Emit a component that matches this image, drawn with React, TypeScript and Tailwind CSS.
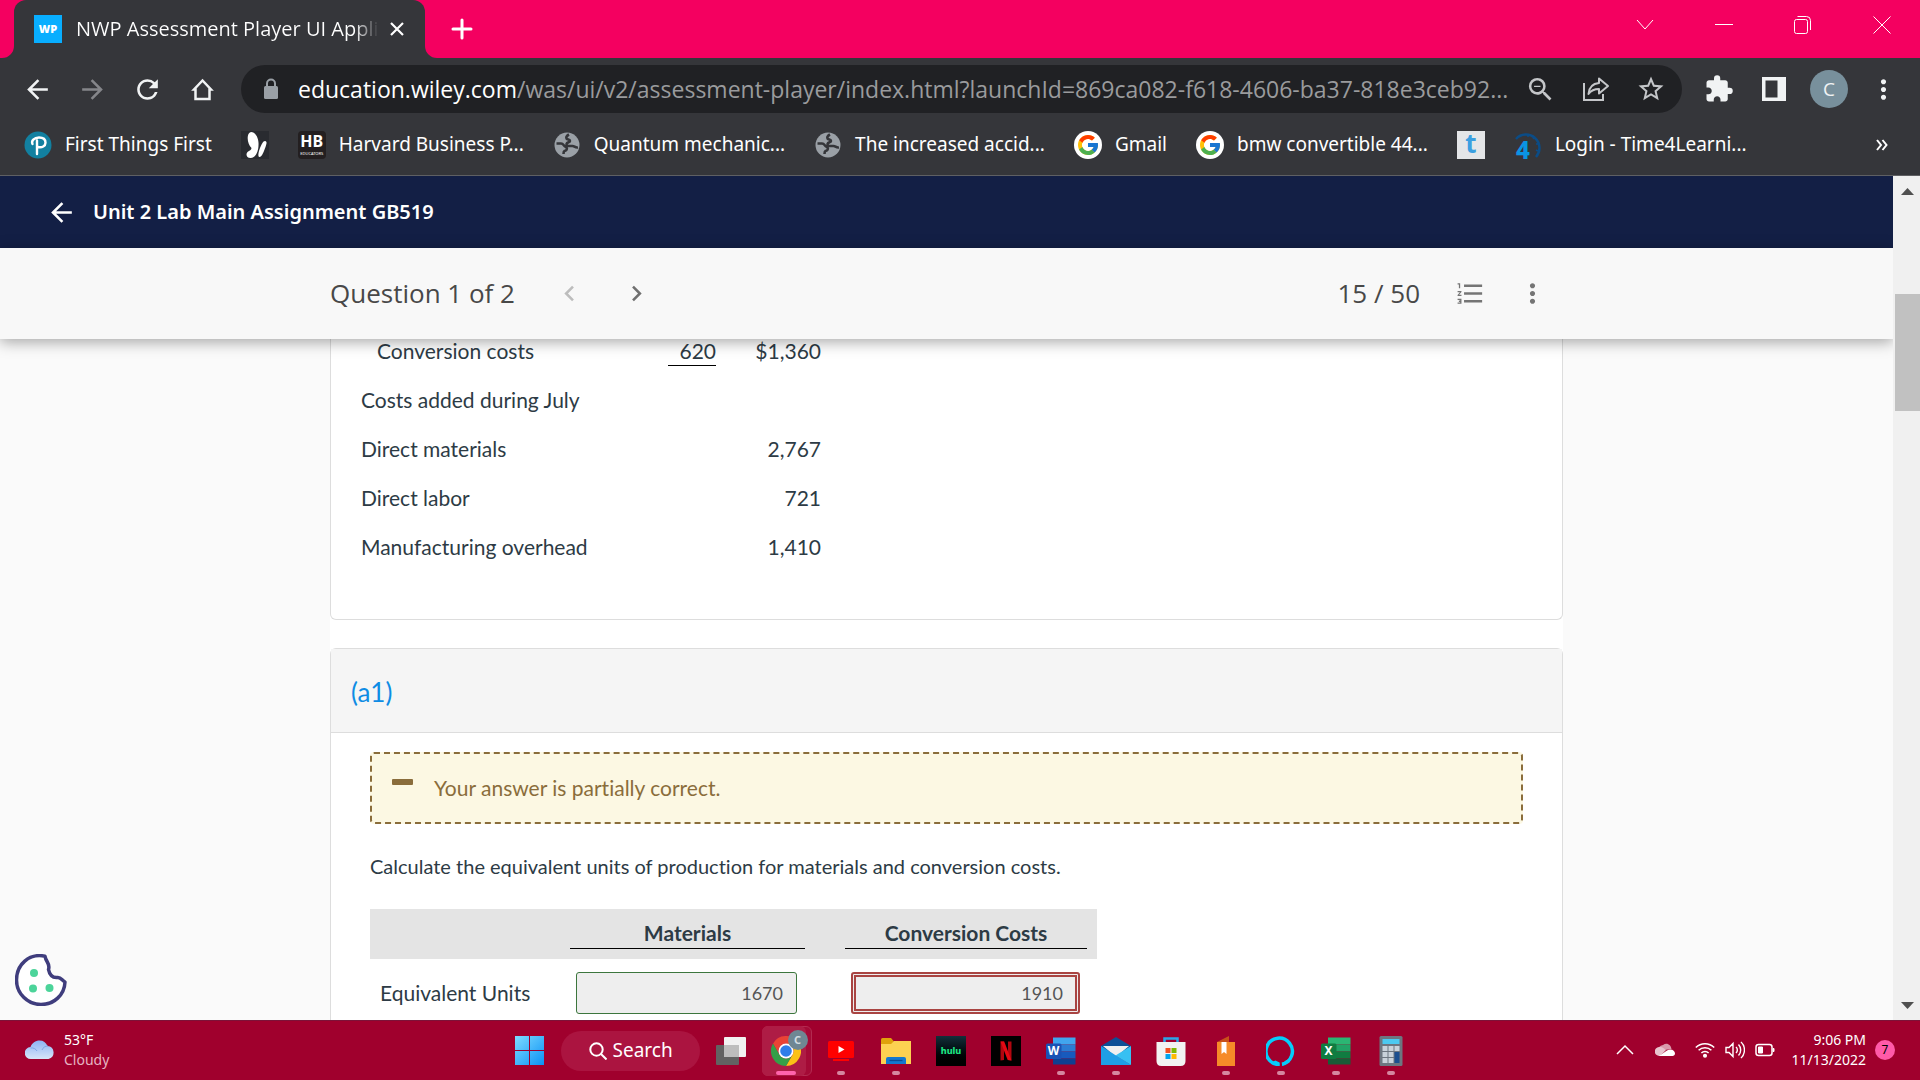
import type { ReactNode } from 'react'
import {
  MdArrowBack,
  MdArrowForward,
  MdChevronLeft,
  MdChevronRight,
  MdExtension,
  MdFormatListNumbered,
  MdMoreVert,
  MdRefresh,
  MdStarBorder,
  MdZoomOut,
} from 'react-icons/md'
import { FcGoogle } from 'react-icons/fc'

function TabStrip() {
  return (
    <div className="flex h-[58px] shrink-0 items-stretch bg-[#f40060] text-white">
      <div className="relative ml-[14px] flex w-[411px] items-center rounded-t-xl bg-[#35363a] pl-5 pr-5">
        <svg className="absolute -left-3 bottom-0 h-3 w-3" viewBox="0 0 12 12" aria-hidden="true">
          <path d="M12 0v12H0A12 12 0 0 0 12 0Z" fill="#35363a" />
        </svg>
        <svg className="absolute -right-3 bottom-0 h-3 w-3" viewBox="0 0 12 12" aria-hidden="true">
          <path d="M0 0v12h12A12 12 0 0 1 0 0Z" fill="#35363a" />
        </svg>
        <span className="flex h-7 w-7 shrink-0 items-center justify-center bg-[#08aeff] text-[11px] font-extrabold">
          WP
        </span>
        <span className="ml-[14px] w-[304px] whitespace-nowrap bg-linear-to-r from-white from-92% to-[#35363a] bg-clip-text text-[20px] text-transparent">
          NWP Assessment Player UI Appli
        </span>
        <button aria-label="Close tab" className="ml-[10px] shrink-0">
          <svg className="h-4 w-4" viewBox="0 0 16 16" fill="none" stroke="#fff" strokeWidth="2.2">
            <path d="m2 2 12 12M14 2 2 14" />
          </svg>
        </button>
      </div>
      <button aria-label="New tab" className="ml-[26px]">
        <svg className="h-[22px] w-[22px]" viewBox="0 0 22 22" fill="none" stroke="#fff" strokeWidth="3" strokeLinecap="round">
          <path d="M11 2v18M2 11h18" />
        </svg>
      </button>
      <div className="ml-auto flex items-center gap-[59px] pb-[9px] pr-7">
        <button aria-label="Search tabs">
          <svg className="h-5 w-5" viewBox="0 0 20 20" fill="none" stroke="#fff">
            <path d="m2 5 8 9 8-9" />
          </svg>
        </button>
        <button aria-label="Minimize">
          <svg className="h-5 w-5" viewBox="0 0 20 20" fill="none" stroke="#fff">
            <path d="M1 9.500h18" />
          </svg>
        </button>
        <button aria-label="Restore">
          <svg className="h-5 w-5" viewBox="0 0 20 20" fill="none" stroke="#fff">
            <rect x="1.500" y="4.500" width="13" height="14" rx="2" />
            <path d="M4.500 1.500h9a4 4 0 0 1 4 4V15" />
          </svg>
        </button>
        <button aria-label="Close">
          <svg className="h-5 w-5" viewBox="0 0 20 20" fill="none" stroke="#fff">
            <path d="m1.500 1.500 17 17M18.500 1.500l-17 17" />
          </svg>
        </button>
      </div>
    </div>
  )
}

function AddressBar() {
  return (
    <div className="flex h-[62px] shrink-0 items-center bg-[#35363a] pl-[22px] pr-[21px] text-[#f1f3f4]">
      <div className="flex items-center gap-6">
        <button aria-label="Back">
          <MdArrowBack className="h-[31px] w-[31px]" />
        </button>
        <button aria-label="Forward" className="text-[#85868a]">
          <MdArrowForward className="h-[31px] w-[31px]" />
        </button>
        <button aria-label="Reload">
          <MdRefresh className="h-[31px] w-[31px]" />
        </button>
        <button aria-label="Home">
          <svg className="h-[31px] w-[31px]" viewBox="0 0 31 31" fill="none" stroke="currentColor" strokeWidth="2.5">
            <path d="M15.500 6.500 7 15.500h1.500V25h14v-9.500H24Z" />
          </svg>
        </button>
      </div>
      <div className="ml-[23px] flex h-12 min-w-0 flex-1 items-center rounded-full bg-[#202124] pl-[23px] pr-4">
        <svg className="h-[22px] w-[14px] shrink-0" viewBox="0 0 14 22" aria-hidden="true">
          <rect y="8" width="14" height="13" rx="1.500" fill="#9aa0a6" />
          <path d="M3 9V5.500a4 4 0 0 1 8 0V9" fill="none" stroke="#9aa0a6" strokeWidth="2" />
        </svg>
        <span className="ml-5 min-w-0 flex-1 whitespace-nowrap text-[23px] leading-8 text-[#9a9b9d]">
          <span className="text-white">education.wiley.com</span>
          /was/ui/v2/assessment-player/index.html?launchId=869ca082-f618-4606-ba37-818e3ceb92...
        </span>
        <div className="flex shrink-0 items-center gap-[25px] text-[#c4c6c9]">
          <button aria-label="Zoom">
            <MdZoomOut className="h-[31px] w-[31px]" />
          </button>
          <button aria-label="Share this page">
            <svg className="h-[30px] w-[30px]" viewBox="0 0 30 30" fill="none" stroke="currentColor" strokeWidth="2">
              <path d="M3 9v17h19v-6" />
              <path d="M18 4.500 27 12l-9 7.500V15c-5 0-8 1.500-10.500 5C8 13.500 12 9.500 18 9Z" strokeLinejoin="round" />
            </svg>
          </button>
          <button aria-label="Bookmark this tab">
            <MdStarBorder className="h-[30px] w-[30px]" />
          </button>
        </div>
      </div>
      <div className="ml-[22px] flex shrink-0 items-center">
        <button aria-label="Extensions">
          <MdExtension className="h-[30px] w-[30px]" />
        </button>
        <button aria-label="Side panel" className="ml-7">
          <svg className="h-6 w-6" viewBox="0 0 24 24" fill="currentColor">
            <path d="M0 0h24v24H0ZM3.500 3.500v17h12v-17Z" fillRule="evenodd" />
          </svg>
        </button>
        <button className="ml-6 h-[38px] w-[38px] rounded-full bg-[#78909c] text-[19px] leading-[38px]">C</button>
        <button aria-label="Menu" className="ml-5">
          <MdMoreVert className="h-[31px] w-[31px]" />
        </button>
      </div>
    </div>
  )
}

function Globe() {
  return (
    <svg className="h-7 w-7" viewBox="0 0 28 28" aria-hidden="true">
      <circle cx="14" cy="14" r="12.500" fill="#9aa0a6" />
      <path
        d="M16 3.500c-1 .5-3.500 2-2.500 4 1 1.500 3.500.5 3.500 2.500 0 1.500-3 1-3.500 3-.3 1.500 1.500 2 3 2h3c2 0 2.500 2 5.500 1.500M3.500 12.500h4.500c2 0 2.500 1.500 3.500 2.500l2 1.500c1 1.500 0 3-2 3.500-1 .5-1 2-1 3"
        fill="none"
        stroke="#35363a"
        strokeWidth="2.600"
      />
    </svg>
  )
}

function GoogleMark() {
  return (
    <span className="flex h-7 w-7 items-center justify-center rounded-full bg-white">
      <FcGoogle className="h-6 w-6" />
    </span>
  )
}

const bookmarks: { id: string; label?: string; icon: ReactNode }[] = [
  {
    id: 'pearson',
    label: 'First Things First',
    icon: (
      <svg className="h-7 w-7" viewBox="0 0 28 28" aria-hidden="true">
        <circle cx="14" cy="14" r="13.500" fill="#1280a0" />
        <path d="M13 23V9.500M8.500 13c-1.500-3 1.500-6.500 6.500-6.500 4 0 6.500 2 6.500 5.200 0 3.300-3.500 5.300-7.500 4.300" fill="none" stroke="#fff" strokeWidth="2.400" strokeLinecap="round" />
      </svg>
    ),
  },
  {
    id: 'butterfly',
    icon: (
      <svg className="h-7 w-7" viewBox="0 0 28 28" aria-hidden="true">
        <path d="M0 0h28v28H0Z" fill="#292b30" />
        <path d="M10 1c5 0 8 7 7.500 13 0 5-2 13-8 13-4 0-5-4-3-6 2-1.500 4-2 4-4C6 13 5 2 10 1Z" fill="#fff" />
        <path d="M24 10c2.500.5 1.500 3 .5 6-1.500 4-3.500 10-6 10-2-.5-1-5 .5-9 1.500-3.500 3-7 5-7Z" fill="#fff" />
      </svg>
    ),
  },
  {
    id: 'harvard',
    label: 'Harvard Business P...',
    icon: (
      <span className="flex h-7 w-7 flex-col items-center justify-center rounded bg-[#231f20] leading-none">
        <span className="text-[16px] font-bold leading-[15px]">HB</span>
        <span className="mt-0.5 text-[4px] leading-[5px]">EDUCATORS</span>
      </span>
    ),
  },
  { id: 'quantum', label: 'Quantum mechanic...', icon: <Globe /> },
  { id: 'accid', label: 'The increased accid...', icon: <Globe /> },
  { id: 'gmail', label: 'Gmail', icon: <GoogleMark /> },
  { id: 'bmw', label: 'bmw convertible 44...', icon: <GoogleMark /> },
  {
    id: 'tumble',
    icon: (
      <span className="flex h-7 w-7 items-center justify-center bg-[#e4e6e8] text-[26px] font-bold leading-none text-[#3b9fe0]">
        <span className="pb-1">t</span>
      </span>
    ),
  },
  {
    id: 'time4',
    label: 'Login - Time4Learni...',
    icon: (
      <span className="relative h-7 w-7">
        <svg className="h-7 w-7" viewBox="0 0 28 28" aria-hidden="true">
          <path d="M2 8A13 13 0 1 1 22 26" fill="none" stroke="#0b4c86" strokeWidth="2.500" />
          <path d="M14 3v3M21 6l-2 2M25 13h-3M24 20l-2-1" stroke="#0b4c86" strokeWidth="1.500" />
        </svg>
        <span className="absolute bottom-0 left-0.5 text-[24px] font-extrabold leading-[19px] text-[#0a94e3]">4</span>
      </span>
    ),
  },
]

function BookmarksBar() {
  return (
    <nav className="flex h-14 shrink-0 items-center gap-[29px] border-b border-[#5f6063] bg-[#35363a] pb-[6px] pl-6 pr-8 font-['Noto_Sans',sans-serif] text-[19px] text-white">
      {bookmarks.map((b) => (
        <a key={b.id} href="#" aria-label={b.label ?? b.id} className="flex items-center gap-[13px] whitespace-nowrap">
          {b.icon}
          {b.label && <span>{b.label}</span>}
        </a>
      ))}
      <button aria-label="More bookmarks" className="ml-auto">
        <svg className="h-3 w-3" viewBox="0 0 12 12" fill="none" stroke="#fff" strokeWidth="2">
          <path d="m1 1 4 5-4 5M6.500 1l4 5-4 5" />
        </svg>
      </button>
    </nav>
  )
}

const costs = [
  { label: 'Costs added during July', amount: '' },
  { label: 'Direct materials', amount: '2,767' },
  { label: 'Direct labor', amount: '721' },
  { label: 'Manufacturing overhead', amount: '1,410' },
]

function CostTable() {
  return (
    <table className="font-['Lato',sans-serif] text-[21px] leading-6">
      <tbody>
        <tr className="h-9">
          <td className="w-[307px] pb-3 pl-4">Conversion costs</td>
          <td className="w-12 pb-[9px] text-right">
            <span className="block border-b border-black pb-0.5">620</span>
          </td>
          <td className="w-[105px] pb-3 text-right">$1,360</td>
        </tr>
        {costs.map((c) => (
          <tr key={c.label} className="h-[49px]">
            <td>{c.label}</td>
            <td />
            <td className="text-right">{c.amount}</td>
          </tr>
        ))}
      </tbody>
    </table>
  )
}

function AnswerTable() {
  return (
    <table className="mt-[31px] text-[21px] leading-6">
      <thead>
        <tr className="h-[50px] bg-[#e4e4e4] align-bottom">
          <td className="w-[190px]" />
          <th scope="col" className="w-[255px] px-[10px] pb-[10px]">
            <span className="block border-b border-black pb-[3px]">Materials</span>
          </th>
          <th scope="col" className="w-[282px] pb-[10px] pl-[30px] pr-[10px]">
            <span className="block border-b border-black pb-[3px]">Conversion Costs</span>
          </th>
        </tr>
      </thead>
      <tbody>
        <tr>
          <th scope="row" className="pl-[10px] pt-[13px] text-left font-normal">Equivalent Units</th>
          <td className="pl-4 pt-[13px]">
            <input
              aria-label="Equivalent Units, Materials"
              defaultValue="1670"
              className="block h-[42px] w-[221px] rounded-[3px] border border-[#3c763d] bg-[#eee] px-[13px] text-right text-[18px] text-[#555]"
            />
          </td>
          <td className="pl-9 pt-[13px]">
            <input
              aria-label="Equivalent Units, Conversion Costs"
              defaultValue="1910"
              className="block h-[42px] w-[229px] rounded-[3px] border-[5px] border-double border-[#a94442] bg-[#eee] px-3 text-right text-[18px] text-[#555]"
            />
          </td>
        </tr>
      </tbody>
    </table>
  )
}

function Assessment() {
  return (
    <div className="relative flex min-w-0 flex-1 flex-col overflow-hidden bg-[#fafafa]">
      <header className="flex h-[72px] shrink-0 items-center gap-4 bg-[#131f45] pl-[46px] text-white">
        <button aria-label="Back to assignment">
          <MdArrowBack className="h-[31px] w-[31px]" />
        </button>
        <h1 className="font-['Noto_Sans',sans-serif] text-[20px] font-semibold">Unit 2 Lab Main Assignment GB519</h1>
      </header>
      <div className="z-10 h-[91px] shrink-0 bg-[#f8f8f8] text-[#484848] shadow-[0_3px_14px_rgba(0,0,0,0.35)]">
        <div className="mx-auto flex h-full w-full max-w-[1233px] items-center pr-[15px] text-[26px]">
          <span>Question 1 of 2</span>
          <button aria-label="Previous question" className="ml-[39px] text-[#bdbdbd]">
            <MdChevronLeft className="h-[31px] w-[31px]" />
          </button>
          <button aria-label="Next question" className="ml-9 text-[#707070]">
            <MdChevronRight className="h-[31px] w-[31px]" />
          </button>
          <span className="ml-auto">15 / 50</span>
          <button aria-label="Question list" className="ml-[35px] text-[#757575]">
            <MdFormatListNumbered className="h-[31px] w-[31px]" />
          </button>
          <button aria-label="More options" className="ml-[31px] text-[#757575]">
            <MdMoreVert className="h-[31px] w-[31px]" />
          </button>
        </div>
      </div>
      <main className="mx-auto flex min-h-0 w-full max-w-[1233px] flex-1 flex-col bg-white text-[#2d3b45] [font-variant-ligatures:none]">
        <section className="h-[281px] shrink-0 rounded-b-md border border-t-0 border-[#ddd] pl-[30px]">
          <CostTable />
        </section>
        <section className="mt-7 flex-1 rounded-t-md border border-b-0 border-[#ddd] font-['Lato',sans-serif]">
          <h2 className="flex h-[84px] items-center border-b border-[#ddd] bg-[#f5f5f5] pl-5 pt-1 text-[26px] text-[#0e8ce4]">
            (a1)
          </h2>
          <div className="px-[39px] pt-[19px] text-[20px] leading-6">
            <div className="flex h-[72px] items-center rounded border-2 border-dashed border-[#8a6d3b] bg-[#fcf8e3] pl-5 text-[21px] text-[#8a6d3b]">
              <span className="mb-3 h-[6px] w-[21px] rounded-[1px] bg-[#8a6d3b]" />
              <span className="ml-[21px]">Your answer is partially correct.</span>
            </div>
            <p className="mt-[30px]">
              Calculate the equivalent units of production for materials and conversion costs.
            </p>
            <AnswerTable />
          </div>
        </section>
      </main>
      <button aria-label="Cookie preferences" className="absolute bottom-[14px] left-[15px]">
        <svg className="h-[52px] w-[52px]" viewBox="0 0 52 52">
          <path
            d="M30 2.200C14-1 1.500 10.500 1.500 26c0 13.500 11 24.500 24.500 24.500 13 0 23.500-9.500 24-22.500-3-1.500-4-5-7.500-4.500-5 .5-8-3-9-8 2-6-2.500-7-3.500-13.300Z"
            fill="#fff"
            stroke="#3f3d7d"
            strokeWidth="3.500"
            strokeLinejoin="round"
          />
          <circle cx="19" cy="19" r="4" fill="#4cd49a" />
          <circle cx="18" cy="34.500" r="4" fill="#4cd49a" />
          <circle cx="34.500" cy="34" r="4" fill="#4cd49a" />
        </svg>
      </button>
    </div>
  )
}

function PageScrollbar() {
  return (
    <div className="flex w-[27px] shrink-0 flex-col items-center bg-[#f0f0f0]" aria-hidden="true">
      <svg className="ml-px mt-3 h-[7px] w-[13px]" viewBox="0 0 13 7">
        <path d="M0 7h13L6.500 0Z" fill="#505050" />
      </svg>
      <div className="ml-auto mt-[99px] h-[117px] w-[25px] bg-[#c1c1c1]" />
      <svg className="mb-[11px] ml-px mt-auto h-[7px] w-[13px]" viewBox="0 0 13 7">
        <path d="M0 0h13L6.500 7Z" fill="#505050" />
      </svg>
    </div>
  )
}

function ChromeLogo() {
  return (
    <svg className="h-[30px] w-[30px]" viewBox="0 0 30 30">
      <path d="M2 7.500A15 15 0 0 1 28 7.500H15a7.500 7.500 0 0 0-6.500 11.250Z" fill="#ea4335" />
      <path d="M28 7.500A15 15 0 0 1 15 30l6.500-11.250A7.500 7.500 0 0 0 15 7.500Z" fill="#fbc116" />
      <path d="M2 7.500A15 15 0 0 0 15 30l6.500-11.250a7.500 7.500 0 0 1-13 0Z" fill="#34a048" />
      <circle cx="15" cy="15" r="7.500" fill="#fff" />
      <circle cx="15" cy="15" r="5.800" fill="#2f7de9" />
    </svg>
  )
}

function OfficeLogo({ letter, tones, box }: { letter: string; tones: string[]; box: string }) {
  return (
    <span className="relative h-[30px] w-[30px]">
      <svg className="h-[30px] w-[30px]" viewBox="0 0 30 30">
        <path d="M7 1.500h22.500v7H7Z" fill={tones[0]} />
        <path d="M7 8.500h22.500v7H7Z" fill={tones[1]} />
        <path d="M7 15.500h22.500v7H7Z" fill={tones[2]} />
        <path d="M7 22.500h22.500v6H7Z" fill={tones[3]} />
        <rect x="0" y="7.500" width="15.500" height="15.500" rx="1.500" fill={box} />
      </svg>
      <span className="absolute left-0 top-[7px] w-[15px] text-center text-[12px] font-bold leading-4 text-white">
        {letter}
      </span>
    </span>
  )
}

const apps: { name: string; running: boolean; icon: ReactNode }[] = [
  {
    name: 'Task view',
    running: false,
    icon: (
      <svg className="h-[30px] w-[30px]" viewBox="0 0 30 30">
        <rect y="9" width="23" height="20" rx="1" fill="#626262" />
        <rect x="8" y="1" width="22" height="20" rx="1" fill="#f1f1f1" />
        <path d="M8 9h15v12H8Z" fill="#bdbdbd" />
      </svg>
    ),
  },
  { name: 'Google Chrome', running: true, icon: <ChromeLogo /> },
  {
    name: 'YouTube',
    running: true,
    icon: (
      <svg className="h-[30px] w-[30px]" viewBox="0 0 30 30">
        <rect x="2" y="5" width="26" height="17" rx="1.500" fill="#f00" />
        <path d="M7 23h16v2H7Z" fill="#f00" />
        <path d="m12.500 10 6 3.500-6 3.500Z" fill="#fff" />
      </svg>
    ),
  },
  {
    name: 'File Explorer',
    running: true,
    icon: (
      <svg className="h-[30px] w-[30px]" viewBox="0 0 30 30">
        <path d="M0 3.500Q0 2 1.500 2H10l3 3.500V12H0Z" fill="#e0a10b" />
        <path d="M0 8h10l3-3h17v23H0Z" fill="#fdd151" />
        <path d="M5 28v-5q0-2 2-2h16q2 0 2 2v5Z" fill="#1478cf" />
        <path d="M8.500 24.500h13" stroke="#0b4c96" strokeWidth="1.300" />
      </svg>
    ),
  },
  {
    name: 'Hulu',
    running: false,
    icon: (
      <span className="flex h-[30px] w-[30px] items-center justify-center bg-linear-to-t from-black to-[#14303b] text-[9px] font-extrabold text-[#1ce783]">
        hulu
      </span>
    ),
  },
  {
    name: 'Netflix',
    running: false,
    icon: (
      <svg className="h-[30px] w-[30px]" viewBox="0 0 30 30">
        <path d="M0 0h30v30H0Z" fill="#000" />
        <path d="M9.500 5.500h3.500V24l-3.500.5ZM17 5.500h3.500v19L17 24Z" fill="#b1060f" />
        <path d="M9.500 5.500h3.700l7.300 19-3.800-.5Z" fill="#e50914" />
      </svg>
    ),
  },
  { name: 'Word', running: true, icon: <OfficeLogo letter="W" tones={['#41a5ee', '#2b7cd3', '#185abd', '#103f91']} box="#1a52b5" /> },
  {
    name: 'Mail',
    running: true,
    icon: (
      <svg className="h-[30px] w-[30px]" viewBox="0 0 30 30">
        <path d="M0 10 15 1l15 9v5H0Z" fill="#0d4f96" />
        <path d="M2 10h26L15 21Z" fill="#f0f0f0" />
        <path d="M0 10v19h30Z" fill="#1e9fe6" />
        <path d="M30 10v19L14.500 19.500Z" fill="#37c0f2" />
        <path d="M14.500 19.500 30 29H0Z" fill="#1e9fe6" />
      </svg>
    ),
  },
  {
    name: 'Microsoft Store',
    running: false,
    icon: (
      <svg className="h-[30px] w-[30px]" viewBox="0 0 30 30">
        <path d="M8.500 8V2.500h13V8" fill="none" stroke="#2ba6e8" strokeWidth="2.500" />
        <path d="M.5 6h29v19q0 5-5 5h-19q-5 0-5-5Z" fill="#f2f2f2" />
        <path d="M9.500 12h5v5h-5Z" fill="#f25022" />
        <path d="M15.500 12h5v5h-5Z" fill="#7fba00" />
        <path d="M9.500 18h5v5h-5Z" fill="#00a4ef" />
        <path d="M15.500 18h5v5h-5Z" fill="#ffb900" />
      </svg>
    ),
  },
  {
    name: 'Books',
    running: true,
    icon: (
      <svg className="h-[30px] w-[30px]" viewBox="0 0 30 30">
        <path d="M6 6 18 0v6Z" fill="#c8501a" />
        <path d="M6 6h18v24H6Z" fill="#f68b28" />
        <path d="M10.500 6h5v12L13 16l-2.500 2Z" fill="#fff" />
      </svg>
    ),
  },
  {
    name: 'Alexa',
    running: true,
    icon: (
      <svg className="h-[30px] w-[30px]" viewBox="0 0 30 30">
        <path d="M13.500 28.500A13.200 13.200 0 1 1 16 28.200" fill="none" stroke="#05cdfb" strokeWidth="3.500" />
        <path d="M13.500 30v-3.500l-4-2L6 26ZM16 30q-.5-4 7-7l1 3Z" fill="#05cdfb" />
      </svg>
    ),
  },
  { name: 'Excel', running: true, icon: <OfficeLogo letter="X" tones={['#2bb673', '#21a366', '#107c41', '#185c37']} box="#107c41" /> },
  {
    name: 'Calculator',
    running: true,
    icon: (
      <svg className="h-[30px] w-[30px]" viewBox="0 0 30 30">
        <rect x="3.500" width="23" height="30" rx="1.500" fill="#6d7680" />
        <path d="M6.500 3h17v5h-17Z" fill="#4cc9f0" />
        <path d="M6.500 10h5v5h-5ZM12.500 10h5v5h-5ZM18.500 10h5v5h-5ZM6.500 16h5v5h-5ZM12.500 16h5v5h-5ZM6.500 22h5v5h-5ZM12.500 22h5v5h-5Z" fill="#c9d2da" />
        <path d="M18.500 16h5v11h-5Z" fill="#1b4f8f" />
      </svg>
    ),
  },
]

function Taskbar() {
  return (
    <footer className="grid h-[60px] shrink-0 grid-cols-[1fr_auto_1fr] items-center border-t border-[#7d1238] bg-[#a0002d] font-['Noto_Sans',sans-serif] text-white">
      <div className="flex items-center gap-[9px] pb-0.5 pl-[25px] text-[14px] leading-5">
        <svg className="h-5 w-[30px]" viewBox="0 0 30 20" aria-hidden="true">
          <defs>
            <linearGradient id="cloud" x1="0" y1="0" x2="0" y2="1">
              <stop offset="0" stopColor="#8db4f5" />
              <stop offset="1" stopColor="#d7e5f8" />
            </linearGradient>
          </defs>
          <path d="M6 19a6 6 0 0 1-.5-12C7 3 10.500.5 14.500.5c4 0 6.500 2 8 5.500a6.600 6.600 0 0 1 1 13Z" fill="url(#cloud)" />
          <path d="M5.500 8c3-.5 5.500 1 6.500 3M17 10c1-2.500 3-4 6-4" fill="none" stroke="#7ea5e6" />
        </svg>
        <div>
          <div>53°F</div>
          <div className="text-[#e6b3c0]">Cloudy</div>
        </div>
      </div>

      <div className="flex items-center">
        <button aria-label="Start" className="flex w-[55px] justify-center">
          <svg className="h-[29px] w-[29px]" viewBox="0 0 29 29">
            <defs>
              <linearGradient id="win" x1="0" y1="0" x2="1" y2="1">
                <stop offset="0" stopColor="#7fdcff" />
                <stop offset="1" stopColor="#0a91f5" />
              </linearGradient>
            </defs>
            <path d="M0 0h14v14H0ZM15 0h14v14H15ZM0 15h14v14H0ZM15 15h14v14H15Z" fill="url(#win)" />
          </svg>
        </button>
        <button className="mx-1 flex h-10 w-[139px] items-center gap-[6px] rounded-full bg-[#ab1440] pl-7 text-[19px]">
          <svg className="h-[18px] w-[18px]" viewBox="0 0 18 18" fill="none" stroke="#fff" strokeWidth="2">
            <circle cx="7.500" cy="7.500" r="6.200" />
            <path d="m12 12 5.500 5.500" />
          </svg>
          Search
        </button>
        {apps.map((app) => (
          <button key={app.name} aria-label={app.name} className="relative flex h-[50px] w-[55px] items-center justify-center">
            {app.name === 'Google Chrome' && (
              <>
                <span className="absolute inset-y-0 left-[3px] w-[50px] rounded-md border border-[#b32a50] bg-[#a40a36]" />
                <span className="absolute inset-y-0 left-[3px] w-[44px] rounded-md bg-[#ae1c45]" />
                <span className="absolute bottom-px left-[17px] h-1 w-5 rounded-full bg-[#ff63ac]" />
                <span className="absolute right-[6px] top-1 z-10 h-5 w-5 rounded-full bg-[#6f8793] text-[11px] font-bold leading-5 text-[#d3dde2]">
                  C
                </span>
              </>
            )}
            <span className="relative flex">{app.icon}</span>
            {app.running && app.name !== 'Google Chrome' && (
              <span className="absolute bottom-px h-1 w-2 rounded-full bg-[#d587a0]" />
            )}
          </button>
        ))}
      </div>

      <div className="flex items-center justify-end pb-0.5 pr-[25px]">
        <button aria-label="Show hidden icons">
          <svg className="h-5 w-5" viewBox="0 0 20 20" fill="none" stroke="#fff" strokeWidth="1.500">
            <path d="m2 14 8-8 8 8" />
          </svg>
        </button>
        <svg className="ml-5 h-5 w-5" viewBox="0 0 20 20" aria-label="OneDrive">
          <path d="M3 11a6 6 0 0 1 5-6c4-3 8 0 8.500 4Z" fill="#d99aab" />
          <path d="M4.500 16A4.500 4.500 0 0 1 4 7c3-.5 5 1 7 3l-6 6Z" fill="#e8c3cd" />
          <path d="M4 16 12 10.500c4-2.500 8 0 8 3 0 1.500-1.200 2.500-2.500 2.500Z" fill="#fff" />
        </svg>
        <svg className="ml-5 h-5 w-5" viewBox="0 0 20 20" fill="none" stroke="#fff" strokeWidth="1.500" aria-label="Wi-Fi">
          <path d="M.8 7.500a13 13 0 0 1 18.400 0M3.600 10.300a9 9 0 0 1 12.800 0M6.400 13.100a5 5 0 0 1 7.200 0" />
          <circle cx="10" cy="15.800" r="1.300" fill="#fff" />
        </svg>
        <svg className="ml-[10px] h-5 w-5" viewBox="0 0 20 20" fill="none" stroke="#fff" strokeWidth="1.400" aria-label="Volume">
          <path d="M1 7.500h3l4-4v13l-4-4H1ZM11 7a4 4 0 0 1 0 6M13.500 4.500a8 8 0 0 1 0 11M16 2a11 11 0 0 1 0 16" />
        </svg>
        <svg className="ml-[10px] h-5 w-5" viewBox="0 0 20 20" fill="none" stroke="#fff" strokeWidth="1.500" aria-label="Battery">
          <rect x="1" y="4.500" width="16" height="11" rx="2.500" />
          <path d="M3.500 7h4v6h-4ZM18 8.500v3h1v-3Z" fill="#fff" strokeWidth="1" />
        </svg>
        <div className="ml-[17px] text-right text-[14px] leading-5">
          <div>9:06 PM</div>
          <div>11/13/2022</div>
        </div>
        <span className="ml-[9px] h-5 w-5 rounded-full bg-[#ff5aa8] text-center text-[12px] leading-5 text-black">7</span>
      </div>
    </footer>
  )
}

export default function App() {
  return (
    <div className="flex h-screen flex-col overflow-hidden font-['Open_Sans',sans-serif]">
      <TabStrip />
      <AddressBar />
      <BookmarksBar />
      <div className="flex min-h-0 flex-1">
        <Assessment />
        <PageScrollbar />
      </div>
      <Taskbar />
    </div>
  )
}
